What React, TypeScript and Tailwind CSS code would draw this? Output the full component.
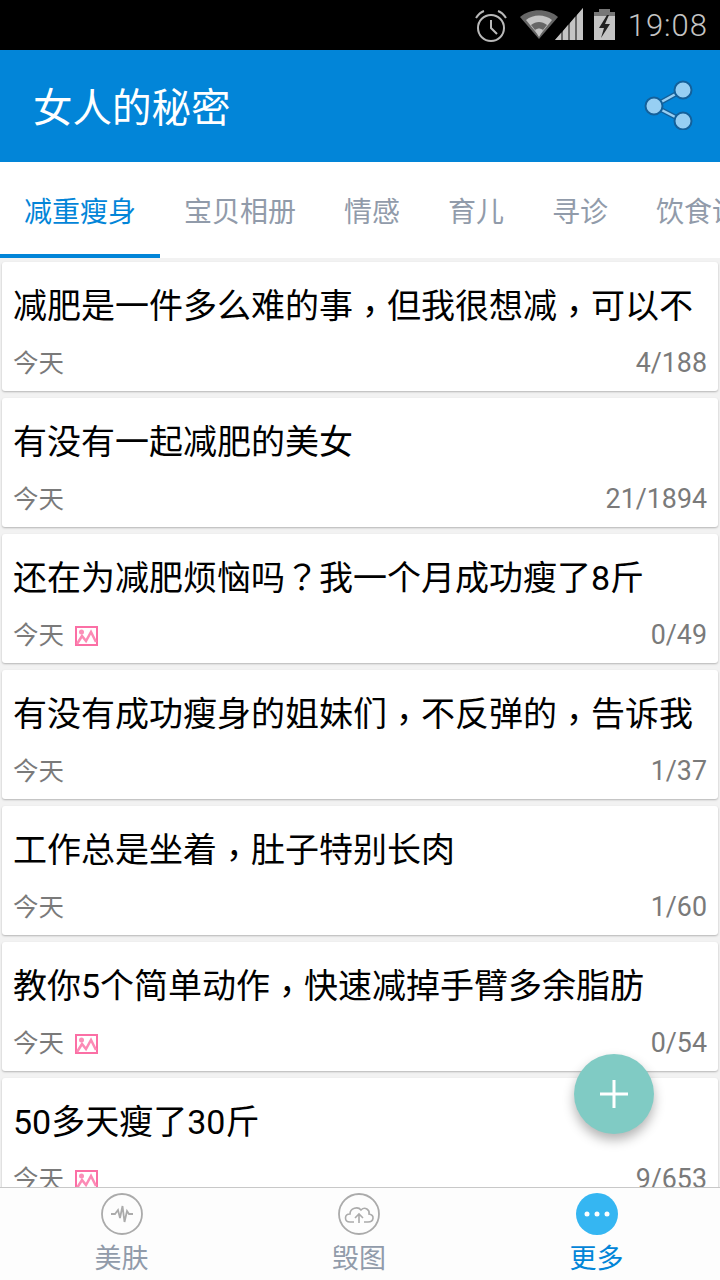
const font = { cjk: 'font-["Roboto","Noto_Sans_CJK_SC",sans-serif]' }

type Post = {
  title: string
  count: string
  pic?: boolean
}

const tabs = ['减重瘦身', '宝贝相册', '情感', '育儿', '寻诊', '饮食调理']

const posts: Post[] = [
  { title: '减肥是一件多么难的事，但我很想减，可以不', count: '4/188' },
  { title: '有没有一起减肥的美女', count: '21/1894' },
  { title: '还在为减肥烦恼吗？我一个月成功瘦了8斤', count: '0/49', pic: true },
  { title: '有没有成功瘦身的姐妹们，不反弹的，告诉我', count: '1/37' },
  { title: '工作总是坐着，肚子特别长肉', count: '1/60' },
  { title: '教你5个简单动作，快速减掉手臂多余脂肪', count: '0/54', pic: true },
  { title: '50多天瘦了30斤', count: '9/653', pic: true },
]

function PicIcon() {
  return (
    <svg width="24" height="20" viewBox="0 0 24 20" className="ml-[11px] mt-[1px]">
      <rect x="1" y="1" width="21" height="18" fill="#fff" stroke="#fb6fa5" strokeWidth="2" />
      <circle cx="6.5" cy="6" r="2.5" fill="#fb8fb8" />
      <path d="M2 18 L7 10 L11 15 L16 6 L21 16" fill="none" stroke="#fc8ab5" strokeWidth="2.5" />
    </svg>
  )
}

// the reference has centered punctuation, which the TC cut of the font draws
function Title({ text }: { text: string }) {
  return (
    <>
      {text.split(/([，？])/).map((part, i) => {
        if (part === '，') {
          return (
            <span key={i} className='inline-block translate-y-[6px] font-["Noto_Sans_CJK_TC"] leading-[0]'>
              {part}
            </span>
          )
        }
        if (part === '？') {
          return (
            <span key={i} className='font-["Noto_Sans_CJK_TC"] leading-[0]'>
              {part}
            </span>
          )
        }
        return <span key={i}>{part}</span>
      })}
    </>
  )
}

function StatusBar() {
  return (
    <div className="flex h-[50px] shrink-0 items-center justify-end bg-black pr-[12px]">
      <svg width="34" height="32" viewBox="0 0 34 32" className="mr-[12px] mt-[2px]" fill="none" stroke="#b9b9b9">
        <circle cx="17" cy="18" r="13" strokeWidth="2" />
        <path d="M17 10 V18 L23 24" strokeWidth="2" />
        <path d="M2 8 C4 5 7 2 10 1 M32 8 C30 5 27 2 24 1" strokeWidth="2" />
      </svg>
      <svg width="38" height="30" viewBox="0 0 38 30" className="mr-[-3px]">
        <path d="M0 7 C10 -2 28 -2 38 7 L19 29 Z" fill="#666" />
        <path d="M6 10 C13 4 25 4 32 10 L19 26 Z" fill="#c4c4c4" />
        <path d="M11 15 C16 11 22 11 27 15 L19 25 Z" fill="#666" />
        <path d="M15 20 C18 18 20 18 23 20 L19 27 Z" fill="#c4c4c4" />
      </svg>
      <svg width="28" height="32" viewBox="0 0 28 32" className="mr-[11px] mt-[-2px]">
        <path d="M0 32 L28 0 V32 Z" fill="#666" />
        <path d="M0 32 L6 25 V32 Z M8 32 V23 L13 17 V32 Z M15 32 V15 L20 9 V32 Z M22 32 V7 L28 0 V32 Z" fill="#c4c4c4" />
      </svg>
      <svg width="21" height="32" viewBox="0 0 21 32" className="mr-[13px]">
        <rect x="5" y="0" width="11" height="4" fill="#777" />
        <rect x="0" y="3" width="21" height="28" fill="#c4c4c4" />
        <rect x="0" y="3" width="21" height="4" fill="#777" />
        <path d="M13 6 L5 19 H10 L7 29 L16 15 H11 L15 6 Z" fill="#222" />
      </svg>
      <span className="font-['Roboto'] text-[31px] font-light leading-none tracking-[1px] text-[#c4c4c4]">19:08</span>
    </div>
  )
}

function Header() {
  return (
    <div className="flex h-[112px] shrink-0 items-center justify-between bg-[#0285d8] pl-[33px] pr-[26px]">
      <span className="pt-[5px] text-[39.5px] leading-none text-white">女人的秘密</span>
      <svg width="50" height="50" viewBox="0 0 50 50" className="mt-[-2px]">
        <path d="M39 10 L10 26 L39 41" fill="none" stroke="#14609a" strokeWidth="5" />
        <path d="M39 10 L10 26 L39 41" fill="none" stroke="#97cff3" strokeWidth="2.5" />
        <circle cx="39" cy="10" r="8.5" fill="#97cff3" stroke="#14609a" strokeWidth="2" />
        <circle cx="10" cy="26" r="8.5" fill="#97cff3" stroke="#14609a" strokeWidth="2" />
        <circle cx="39" cy="41" r="8.5" fill="#97cff3" stroke="#14609a" strokeWidth="2" />
      </svg>
    </div>
  )
}

function Tabs() {
  return (
    <div className="flex h-[96px] shrink-0 overflow-hidden bg-white">
      {tabs.map((tab, i) => (
        <div
          key={tab}
          className={`flex h-full shrink-0 items-center whitespace-nowrap border-b-4 px-[24px] pt-[9px] text-[28px] leading-none ${
            i === 0 ? 'border-[#0285d8] text-[#0285d8]' : 'border-transparent text-[#919baa]'
          }`}
        >
          {tab}
        </div>
      ))}
    </div>
  )
}

function PostCard({ post }: { post: Post }) {
  return (
    <div className="mx-[2px] flex h-[129px] shrink-0 flex-col rounded-[3px] bg-white px-[11px] shadow-[0_1px_2px_rgba(0,0,0,0.25)]">
      <div className="mt-[24px] h-[40px] whitespace-nowrap text-[34px] leading-[40px] text-black">
        <Title text={post.title} />
      </div>
      <div className="mt-[22px] flex items-center leading-[30px] text-[#7a7a7a]">
        <span className="text-[25.5px]">今天</span>
        {post.pic && <PicIcon />}
        <span className="ml-auto text-[26.8px]">{post.count}</span>
      </div>
    </div>
  )
}

function NavItem({ label, active, children }: { label: string; active?: boolean; children: React.ReactNode }) {
  return (
    <div className="flex w-[237px] flex-col items-center">
      {children}
      <span className={`mt-[6px] text-[27px] leading-[36px] ${active ? 'text-[#0285d8]' : 'text-[#919baa]'}`}>{label}</span>
    </div>
  )
}

function BottomNav() {
  return (
    <div className="flex h-[93px] shrink-0 justify-between border-t border-[#c8c8c8] bg-[#fdfdfd] pl-[3px] pr-[5px] pt-[5px]">
      <NavItem label="美肤">
        <svg width="42" height="42" viewBox="0 0 42 42" fill="none" stroke="#ababab">
          <circle cx="21" cy="21" r="20" strokeWidth="1.8" />
          <path d="M10 21 H14 L17 17 L19 25 L21.5 13 L23.5 29 L26 18 L28 21 H32" strokeWidth="1.8" />
        </svg>
      </NavItem>
      <NavItem label="毁图">
        <svg width="42" height="42" viewBox="0 0 42 42" fill="none" stroke="#ababab">
          <circle cx="21" cy="21" r="20" strokeWidth="1.8" />
          <path d="M16 29 H12 C6 29 6 21 12 21 C12 15 20 13 23 17 C27 13 32 17 31 21 C37 22 36 29 30 29 H26" strokeWidth="1.6" />
          <path d="M21 30 V21 M17 25 L21 21 L25 25" strokeWidth="1.6" />
        </svg>
      </NavItem>
      <NavItem label="更多" active>
        <svg width="42" height="42" viewBox="0 0 42 42">
          <circle cx="21" cy="21" r="21" fill="#35b6f2" />
          <circle cx="11" cy="21" r="2.5" fill="#fff" />
          <circle cx="21" cy="21" r="2.5" fill="#fff" />
          <circle cx="31" cy="21" r="2.5" fill="#fff" />
        </svg>
      </NavItem>
    </div>
  )
}

export default function App() {
  return (
    <div className={`relative flex h-[1280px] w-[720px] flex-col overflow-hidden bg-[#f2f2f2] ${font.cjk}`}>
      <StatusBar />
      <Header />
      <Tabs />
      <div className="flex min-h-0 flex-1 flex-col gap-[7px] overflow-hidden pt-[4px]">
        {posts.map((post) => (
          <PostCard key={post.title} post={post} />
        ))}
      </div>
      <BottomNav />
      <button className="absolute left-[574px] top-[1054px] flex h-[80px] w-[80px] items-center justify-center rounded-full bg-[#80cbc4] shadow-[0_6px_12px_rgba(0,0,0,0.3)]">
        <svg width="30" height="30" viewBox="0 0 30 30">
          <path d="M15 1 V29 M1 15 H29" stroke="#fff" strokeWidth="3" />
        </svg>
      </button>
    </div>
  )
}
